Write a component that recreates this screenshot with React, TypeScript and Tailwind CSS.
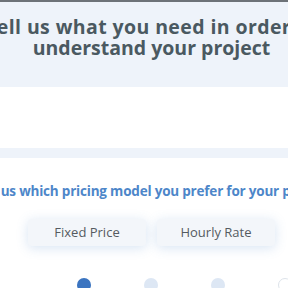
export default function App() {
  const font = { fontFamily: '"Open Sans", "Noto Sans", sans-serif' };
  return (
    <div className="h-[288px] w-[288px] overflow-hidden bg-white" style={font}>
      <div className="h-[2px] bg-[#6d7278]" />
      <div className="flex h-[85px] flex-col items-center overflow-hidden bg-[#eef3fa] pl-[15px] pt-[14px]">
        <div className="flex w-full justify-center">
          <h1 className="whitespace-nowrap text-center text-[19.5px] font-bold leading-[21px] tracking-[0.4px] text-[#4a5961]">
            Tell us what you need in order to
          </h1>
        </div>
        <div className="flex w-full justify-center">
          <h1 className="whitespace-nowrap text-center text-[19.5px] font-bold leading-[21px] text-[#4a5961]">
            understand your project
          </h1>
        </div>
      </div>
      <div className="h-[61px]" />
      <div className="h-[10px] bg-[#eef3fa]" />
      <div className="flex w-full justify-center overflow-hidden pl-[15px] pt-[24px]">
        <p className="whitespace-nowrap text-[13.5px] font-bold leading-[18px] tracking-[-0.2px] text-[#4d86c9]">
          Tell us which pricing model you prefer for your project
        </p>
      </div>
      <div className="flex justify-center gap-[11px] pl-[15px] pt-[19px]">
        <button className="flex h-[27px] w-[118px] items-center justify-center rounded-[4px] bg-[#f3f6fa] text-[13px] font-medium text-[#555b61] shadow-[0_2px_12px_rgba(74,134,200,0.22)]">
          Fixed Price
        </button>
        <button className="flex h-[27px] w-[118px] items-center justify-center rounded-[4px] bg-[#f3f6fa] text-[13px] font-medium text-[#555b61] shadow-[0_2px_12px_rgba(74,134,200,0.22)]">
          Hourly Rate
        </button>
      </div>
      <div className="flex gap-[53px] pl-[77px] pt-[32px]">
        <div className="h-[14px] w-[14px] shrink-0 rounded-full bg-[#3b74c0]" />
        <div className="h-[14px] w-[14px] shrink-0 rounded-full bg-[#dde7f4]" />
        <div className="h-[14px] w-[14px] shrink-0 rounded-full bg-[#dde7f4]" />
        <div className="h-[14px] w-[14px] shrink-0 rounded-full border border-[#dde3ea] bg-white" />
      </div>
    </div>
  );
}
